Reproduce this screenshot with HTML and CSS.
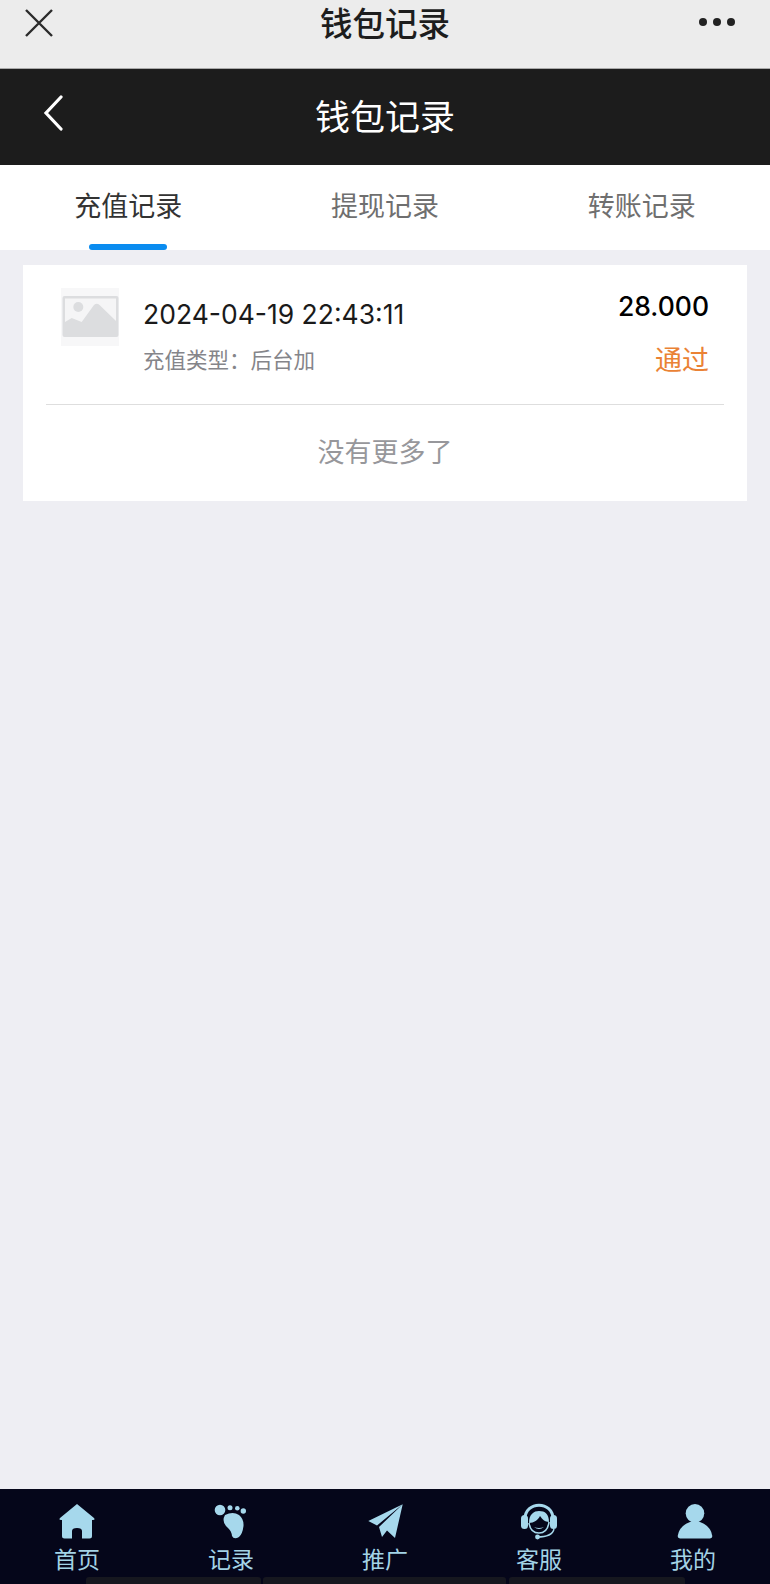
FILE: index.html
```html
<!DOCTYPE html>
<html lang="zh-CN">
<head>
  <meta charset="UTF-8">
  <title>钱包记录</title>
  <link rel="stylesheet" href="styles.css">
</head>
<body>
  <div class="page">

    <div class="wx-bar">
      <svg class="wx-close" width="30" height="30" viewBox="0 0 30 30">
        <path d="M2 2 L28 28 M28 2 L2 28" stroke="#2b2b2b" stroke-width="2.4" fill="none"/>
      </svg>
      <div class="wx-title">钱包记录</div>
      <div class="wx-more"><span></span><span></span><span></span></div>
    </div>

    <div class="header">
      <svg class="back" width="22" height="36" viewBox="0 0 22 36">
        <path d="M18 2 L3 18 L18 34" stroke="#fff" stroke-width="3.2" stroke-linecap="round" fill="none"/>
      </svg>
      <div class="header-title">钱包记录</div>
    </div>

    <div class="tabs">
      <div class="tab active">充值记录</div>
      <div class="tab">提现记录</div>
      <div class="tab">转账记录</div>
    </div>

    <div class="content">
      <div class="card">
        <div class="record">
          <svg class="thumb" width="58" height="58" viewBox="0 0 58 58">
            <rect width="58" height="58" fill="#f7f7f8"/>
            <rect x="1.5" y="8" width="56" height="41" rx="2" fill="#dcdddf"/>
            <path d="M4 34 L10.7 30 L20.7 34 L33 17 Q35.7 14.5 38.5 17 L55 33 L55 10.5 L4 10.5 Z" fill="#f5f5f6"/>
            <circle cx="17.3" cy="19" r="5" fill="#dcdddf"/>
          </svg>
          <div class="record-info">
            <div class="record-date">2024-04-19 22:43:11</div>
            <div class="record-type">充值类型：后台加</div>
          </div>
          <div class="record-right">
            <div class="record-amount">28.000</div>
            <div class="record-status">通过</div>
          </div>
        </div>
        <div class="no-more">没有更多了</div>
      </div>
    </div>

    <div class="nav">
      <div class="nav-items">
        <div class="nav-item">
          <svg width="36" height="36" viewBox="0 0 36 36">
            <path d="M18 0 L35 14 Q36.5 16 34 16 L33 16 L33 32 Q33 34.5 30.5 34.5 L23 34.5 L23 27 Q23 24 18 24 Q13 24 13 27 L13 34.5 L5.5 34.5 Q3 34.5 3 32 L3 16 L2 16 Q-0.5 16 1 14 Z" fill="#a6d8ec"/>
          </svg>
          <span>首页</span>
        </div>
        <div class="nav-item">
          <svg width="36" height="36" viewBox="0 0 36 36">
            <circle cx="7" cy="6" r="5.3" fill="#a6d8ec"/>
            <circle cx="17" cy="3.7" r="2.5" fill="#a6d8ec"/>
            <circle cx="24.3" cy="4.3" r="2.3" fill="#a6d8ec"/>
            <circle cx="30.3" cy="7" r="2.7" fill="#a6d8ec"/>
            <path d="M12 11 Q20 7 26 11 Q31 15 30.5 22 Q29.5 30 26 33 Q21 36 19 32 Q18.5 27 15 24 Q8 18 12 11 Z" fill="#a6d8ec"/>
          </svg>
          <span>记录</span>
        </div>
        <div class="nav-item">
          <svg width="36" height="36" viewBox="0 0 36 36">
            <path d="M35.7 0.3 L1.3 17 L10 21.5 Z M35.7 0.3 L12 23 L15 33 L20 26.5 L28 34 Z" fill="#a6d8ec"/>
          </svg>
          <span>推广</span>
        </div>
        <div class="nav-item">
          <svg width="36" height="36" viewBox="0 0 36 36">
            <path d="M4 15 C4 -3.5 32 -3.5 32 15" stroke="#a6d8ec" stroke-width="3" fill="none"/>
            <rect x="0" y="11" width="7" height="14" rx="3.5" fill="#a6d8ec"/>
            <rect x="29" y="11" width="7" height="14" rx="3.5" fill="#a6d8ec"/>
            <path d="M8 19 C8 10 13 7 18 7 C24 7 28 10 28 18 C24 18 21 15 19 12 C17 16 13 19 8 19 Z" fill="#a6d8ec"/>
            <path d="M8 19 C9 26 13 29 18 29 C23 29 27 26 28 18" stroke="#a6d8ec" stroke-width="1.6" fill="none"/>
            <path d="M13 23 Q18 27 23 23 Q18 25 13 23 Z" fill="#a6d8ec"/>
            <path d="M33 25 C32 30 27 33 16 33" stroke="#a6d8ec" stroke-width="1.4" fill="none"/>
            <circle cx="16.5" cy="33" r="2.4" fill="#a6d8ec"/>
          </svg>
          <span>客服</span>
        </div>
        <div class="nav-item">
          <svg class="nav-user" width="36" height="36" viewBox="0 0 36 36">
            <circle cx="20" cy="9.3" r="9.3" fill="#a6d8ec"/>
            <path d="M15 18 L25 18 Q36 22 37.3 32 Q37.5 34.5 35 34.5 L5 34.5 Q2.5 34.5 2.7 32 Q4 22 15 18 Z" fill="#a6d8ec"/>
          </svg>
          <span>我的</span>
        </div>
      </div>
      <div class="nav-strip">
        <i class="strip-a"></i><i class="strip-b"></i><i class="strip-c"></i>
      </div>
    </div>

  </div>
</body>
</html>
```

FILE: styles.css
```css
* {
  box-sizing: border-box;
}
html, body {
  margin: 0;
  padding: 0;
}
body {
  font-family: "Inter", "Noto Sans CJK SC", sans-serif;
  background: #eeeef3;
}
.page {
  width: 770px;
  height: 1584px;
  display: flex;
  flex-direction: column;
  overflow: hidden;
}
.wx-bar {
  height: 69px;
  background: #ececec;
  border-bottom: 1px solid #a9a9a9;
  display: grid;
  grid-template-columns: 1fr auto 1fr;
  align-items: start;
  padding: 8px 35px 0 24px;
  color: #1d1d1d;
}
.wx-title {
  font-size: 32.5px;
  line-height: 30px;
  font-weight: 500;
  margin: 2px 0 0 11px;
}
.wx-more {
  display: flex;
  gap: 6px;
  margin-top: 10px;
  justify-self: end;
}
.wx-more span {
  width: 8px;
  height: 8px;
  border-radius: 50%;
  background: #222;
}
.header {
  height: 96px;
  background: #1c1c1c;
  display: flex;
  align-items: center;
  justify-content: center;
  position: relative;
}
.back {
  position: absolute;
  left: 43px;
  top: 26px;
}
.header-title {
  color: #fff;
  font-size: 35px;
  line-height: 40px;
  margin-bottom: 1px;
}
.tabs {
  height: 85px;
  background: #fff;
  display: flex;
  padding-bottom: 6px;
}
.tab {
  flex: 1;
  display: flex;
  align-items: center;
  justify-content: center;
  font-size: 27px;
  color: #6f6f6f;
  position: relative;
}
.tab.active {
  color: #333;
}
.tab.active::after {
  content: "";
  position: absolute;
  left: 50%;
  bottom: -6px;
  width: 78px;
  height: 6px;
  margin-left: -39px;
  border-radius: 3px;
  background: #0a8cf0;
}
.content {
  flex: 1;
  padding: 15px 23px 0;
}
.card {
  background: #fff;
  height: 236px;
}
.record {
  margin: 0 23px;
  height: 140px;
  border-bottom: 1px solid #dedede;
  display: flex;
  padding: 23px 15px 0 15px;
}
.thumb {
  flex: none;
}
.record-info {
  flex: 1;
  padding-left: 24px;
}
.record-date {
  font-size: 26.5px;
  line-height: 34px;
  color: #1a1a1a;
  margin-top: 9px;
}
.record-type {
  font-size: 21.5px;
  line-height: 28px;
  color: #85858a;
  margin-top: 15px;
}
.record-right {
  text-align: right;
}
.record-amount {
  font-size: 26.5px;
  line-height: 34px;
  color: #000;
  font-weight: 500;
  margin-top: 1px;
}
.record-status {
  font-size: 27px;
  line-height: 32px;
  color: #ea8235;
  margin-top: 22px;
}
.no-more {
  height: 95px;
  display: flex;
  align-items: center;
  justify-content: center;
  font-size: 27px;
  color: #97979b;
  padding-bottom: 5px;
}
.nav {
  height: 95px;
  background: #05061a;
  position: relative;
}
.nav-items {
  display: flex;
  padding-top: 15px;
}
.nav-item {
  width: 154px;
  display: flex;
  flex-direction: column;
  align-items: center;
  color: #a3d3e6;
  font-size: 23px;
  line-height: 30px;
}
.nav-item svg {
  overflow: visible;
}
.nav-item span {
  margin-top: 5px;
}
.nav-strip {
  position: absolute;
  left: 0;
  bottom: 0;
  width: 100%;
  height: 7px;
}
.nav-strip i {
  position: absolute;
  top: 0;
  height: 7px;
  background: #16171f;
  border-radius: 3px 3px 0 0;
}
.strip-a {
  left: 86px;
  width: 175px;
}
.strip-b {
  left: 263px;
  width: 243px;
}
.strip-c {
  left: 509px;
  width: 176px;
}
```
